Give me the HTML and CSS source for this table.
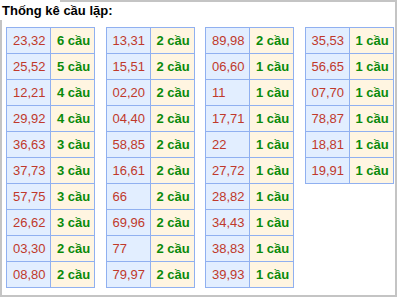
FILE: index.html
```html
<!DOCTYPE html>
<html lang="vi">
<head>
<meta charset="utf-8">
<link rel="stylesheet" href="styles.css">
</head>
<body>
<div class="frame">
  <div class="title">Thống kê cầu lặp:</div>
  <div class="body">
    <table class="tk">
      <tr><td class="num">23,32</td><td class="cnt">6 cầu</td></tr>
      <tr><td class="num">25,52</td><td class="cnt">5 cầu</td></tr>
      <tr><td class="num">12,21</td><td class="cnt">4 cầu</td></tr>
      <tr><td class="num">29,92</td><td class="cnt">4 cầu</td></tr>
      <tr><td class="num">36,63</td><td class="cnt">3 cầu</td></tr>
      <tr><td class="num">37,73</td><td class="cnt">3 cầu</td></tr>
      <tr><td class="num">57,75</td><td class="cnt">3 cầu</td></tr>
      <tr><td class="num">26,62</td><td class="cnt">3 cầu</td></tr>
      <tr><td class="num">03,30</td><td class="cnt">2 cầu</td></tr>
      <tr><td class="num">08,80</td><td class="cnt">2 cầu</td></tr>
    </table>
    <table class="tk">
      <tr><td class="num">13,31</td><td class="cnt">2 cầu</td></tr>
      <tr><td class="num">15,51</td><td class="cnt">2 cầu</td></tr>
      <tr><td class="num">02,20</td><td class="cnt">2 cầu</td></tr>
      <tr><td class="num">04,40</td><td class="cnt">2 cầu</td></tr>
      <tr><td class="num">58,85</td><td class="cnt">2 cầu</td></tr>
      <tr><td class="num">16,61</td><td class="cnt">2 cầu</td></tr>
      <tr><td class="num">66</td><td class="cnt">2 cầu</td></tr>
      <tr><td class="num">69,96</td><td class="cnt">2 cầu</td></tr>
      <tr><td class="num">77</td><td class="cnt">2 cầu</td></tr>
      <tr><td class="num">79,97</td><td class="cnt">2 cầu</td></tr>
    </table>
    <table class="tk">
      <tr><td class="num">89,98</td><td class="cnt">2 cầu</td></tr>
      <tr><td class="num">06,60</td><td class="cnt">1 cầu</td></tr>
      <tr><td class="num">11</td><td class="cnt">1 cầu</td></tr>
      <tr><td class="num">17,71</td><td class="cnt">1 cầu</td></tr>
      <tr><td class="num">22</td><td class="cnt">1 cầu</td></tr>
      <tr><td class="num">27,72</td><td class="cnt">1 cầu</td></tr>
      <tr><td class="num">28,82</td><td class="cnt">1 cầu</td></tr>
      <tr><td class="num">34,43</td><td class="cnt">1 cầu</td></tr>
      <tr><td class="num">38,83</td><td class="cnt">1 cầu</td></tr>
      <tr><td class="num">39,93</td><td class="cnt">1 cầu</td></tr>
    </table>
    <table class="tk">
      <tr><td class="num">35,53</td><td class="cnt">1 cầu</td></tr>
      <tr><td class="num">56,65</td><td class="cnt">1 cầu</td></tr>
      <tr><td class="num">07,70</td><td class="cnt">1 cầu</td></tr>
      <tr><td class="num">78,87</td><td class="cnt">1 cầu</td></tr>
      <tr><td class="num">18,81</td><td class="cnt">1 cầu</td></tr>
      <tr><td class="num">19,91</td><td class="cnt">1 cầu</td></tr>
    </table>
  </div>
</div>
</body>
</html>
```

FILE: styles.css
```css
html, body {
  margin: 0;
  padding: 0;
  background: #fff;
}
.frame {
  width: 397px;
  height: 297px;
  box-sizing: border-box;
  border-right: 2px solid #c4c4c4;
  border-bottom: 2px solid #c4c4c4;
  background: linear-gradient(#c4c4c4, #c4c4c4) no-repeat 60px 0 / 100% 2px;
  display: flex;
  flex-direction: column;
  font-family: "Liberation Sans", Arial, sans-serif;
}
.title {
  height: 20px;
  line-height: 21px;
  padding-left: 2px;
  font-size: 13px;
  font-weight: bold;
  color: #000;
}
.body {
  flex: 1;
  border-left: 2px solid #c4c4c4;
  padding: 7px 0 0 4px;
  display: flex;
  align-items: flex-start;
  gap: 10.5px;
}
.tk {
  border-collapse: collapse;
  table-layout: fixed;
  width: 88px;
  font-size: 13px;
}
.tk td {
  border: 1px solid #90b0f0;
  line-height: 25px;
  height: 25px;
  padding: 0 0 0 6px;
  width: 37px;
  white-space: nowrap;
  overflow: hidden;
}
.num {
  background: #e2eeff;
  color: #c0392b;
}
.cnt {
  background: #fff5e1;
  color: #0a8a0a;
  font-weight: bold;
}
```
